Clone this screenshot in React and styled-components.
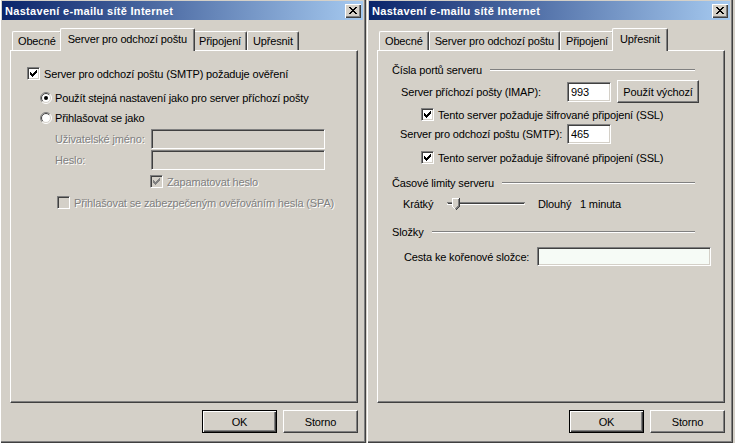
import React from "react";
import styled, { createGlobalStyle } from "styled-components";

const GlobalStyle = createGlobalStyle`
  html, body { margin: 0; padding: 0; background: #d4d0c8; overflow: hidden; }
  body {
    font-family: "Liberation Sans", Arial, sans-serif;
    font-size: 11px;
    letter-spacing: -0.15px;
    color: #000;
  }
`;

const Screen = styled.div`
  display: flex;
  width: 735px;
  height: 443px;
  overflow: hidden;
  background: #d4d0c8;
`;

const Window = styled.div`
  flex: none;
  width: 367px;
  height: 445px;
  margin-top: -2px;
  margin-left: ${p => p.$offset || 0}px;
  box-sizing: border-box;
  padding: 3px;
  display: flex;
  flex-direction: column;
  background: #d4d0c8;
  box-shadow: inset 1px 1px 0 #d4d0c8, inset 2px 2px 0 #fff, inset -1px -1px 0 #404040, inset -2px -2px 0 #808080;
`;

const TitleBar = styled.div`
  height: 19px;
  display: flex;
  align-items: center;
  justify-content: space-between;
  padding: 0 2px 0 3px;
  background: linear-gradient(to right, #0a246a, #a6caf0);
`;

const TitleText = styled.span`
  color: #fff;
  font-weight: bold;
  font-size: 11px;
  letter-spacing: 0.3px;
`;

const CloseButton = styled.div`
  width: 16px;
  height: 14px;
  box-sizing: border-box;
  background: #d4d0c8;
  display: flex;
  align-items: center;
  justify-content: center;
  box-shadow: inset 1px 1px 0 #fff, inset -1px -1px 0 #404040, inset -2px -2px 0 #808080;
`;

const Body = styled.div`
  flex: 1;
  display: flex;
  flex-direction: column;
  padding: 0 5px 0 8px;
`;

const TabRow = styled.div`
  position: relative;
  z-index: 1;
  margin-top: 8px;
  height: 22px;
  display: flex;
  align-items: flex-end;
  padding-left: 2px;
`;

const Tab = styled.div`
  position: relative;
  z-index: ${p => (p.$active ? 2 : 1)};
  height: ${p => (p.$active ? 23 : 19)}px;
  margin: ${p => (p.$active ? "0 -2px -1px" : "0")};
  padding: 0 ${p => (p.$active ? 7 : 5)}px ${p => (p.$active ? 2 : 0)}px;
  box-sizing: border-box;
  display: flex;
  align-items: center;
  background: #d4d0c8;
  border-top: 1px solid #fff;
  border-left: 1px solid #fff;
  border-right: 1px solid #404040;
  border-radius: 2px 2px 0 0;
  box-shadow: inset -1px 0 0 #808080;
  white-space: nowrap;
`;

const Panel = styled.div`
  height: 353px;
  box-sizing: border-box;
  display: flex;
  flex-direction: column;
  border-top: 1px solid #fff;
  border-left: 1px solid #fff;
  border-right: 1px solid #404040;
  border-bottom: 1px solid #404040;
  box-shadow: inset -1px -1px 0 #808080;
`;

const Row = styled.div`
  display: flex;
  align-items: center;
  height: ${p => p.$h || 13}px;
  margin-top: ${p => p.$top || 0}px;
  padding-left: ${p => p.$indent || 0}px;
  white-space: nowrap;
`;

const Label = styled.span`
  flex: none;
  width: ${p => (p.$w ? `${p.$w}px` : "auto")};
  margin-left: ${p => p.$gap || 0}px;
  color: ${p => (p.$disabled ? "#808080" : "#000")};
  text-shadow: ${p => (p.$disabled ? "1px 1px 0 #fff" : "none")};
`;

const BoxFrame = styled.span`
  flex: none;
  width: 13px;
  height: 13px;
  box-sizing: border-box;
  display: flex;
  align-items: center;
  justify-content: center;
  background: ${p => (p.$disabled ? "#d4d0c8" : "#fff")};
  border: 1px solid;
  border-color: #808080 #fff #fff #808080;
  box-shadow: inset 1px 1px 0 #404040, inset -1px -1px 0 #d4d0c8;
`;

const TextBox = styled.input`
  flex: none;
  width: ${p => p.$w}px;
  height: ${p => p.$h || 20}px;
  box-sizing: border-box;
  margin: 0;
  padding: 0 3px;
  font: inherit;
  letter-spacing: inherit;
  color: #000;
  outline: none;
  background: ${p => (p.$disabled ? "#d4d0c8" : p.$tint ? "#f6fbf6" : "#fff")};
  border: 1px solid;
  border-color: #808080 #fff #fff #808080;
  box-shadow: inset 1px 1px 0 #404040, inset -1px -1px 0 #d4d0c8;
`;

const PushButton = styled.div`
  flex: none;
  width: ${p => p.$w || 75}px;
  height: 23px;
  margin-left: ${p => p.$gap || 0}px;
  box-sizing: border-box;
  display: flex;
  align-items: center;
  justify-content: center;
  background: #d4d0c8;
  border: 1px solid;
  border-color: ${p => (p.$default ? "#000" : "#fff #404040 #404040 #fff")};
  box-shadow: ${p =>
    p.$default
      ? "inset 1px 1px 0 #fff, inset -1px -1px 0 #404040, inset -2px -2px 0 #808080"
      : "inset -1px -1px 0 #808080"};
  white-space: nowrap;
`;

const ButtonRow = styled.div`
  display: flex;
  justify-content: flex-end;
  margin-top: 7px;
  gap: 6px;
`;

const GroupHead = styled.div`
  display: flex;
  align-items: center;
  gap: 8px;
  height: 13px;
  margin-top: ${p => p.$top}px;
  padding-left: 14px;
  padding-right: 29px;
  white-space: nowrap;
`;

const Etched = styled.span`
  flex: 1;
  height: 0;
  border-top: 1px solid #808080;
  border-bottom: 1px solid #fff;
`;

const Check = ({ checked, disabled }) => (
  <BoxFrame $disabled={disabled}>
    {checked && (
      <svg width="7" height="7" viewBox="0 0 7 7" shapeRendering="crispEdges">
        <path
          fill={disabled ? "#808080" : "#000"}
          d="M0 2h1v3H0z M1 3h1v3H1z M2 4h1v3H2z M3 3h1v3H3z M4 2h1v3H4z M5 1h1v3H5z M6 0h1v3H6z"
        />
      </svg>
    )}
  </BoxFrame>
);

const arc = (r, from, to) => {
  const a = (d) => [6 + r * Math.cos((d * Math.PI) / 180), 6 + r * Math.sin((d * Math.PI) / 180)];
  const [x1, y1] = a(from);
  const [x2, y2] = a(to);
  return `M${x1} ${y1} A${r} ${r} 0 0 1 ${x2} ${y2}`;
};

const Radio = ({ checked }) => (
  <svg width="12" height="12" viewBox="0 0 12 12" style={{ flex: "none" }}>
    <circle cx="6" cy="6" r="5" fill="#fff" />
    <path d={arc(5.5, 135, 315)} stroke="#808080" fill="none" />
    <path d={arc(4.5, 135, 315)} stroke="#404040" fill="none" />
    <path d={arc(5.5, 315, 135)} stroke="#fff" fill="none" />
    <path d={arc(4.5, 315, 135)} stroke="#d4d0c8" fill="none" />
    {checked && <circle cx="6" cy="6" r="2" fill="#000" />}
  </svg>
);

const Slider = () => (
  <svg width="78" height="14" viewBox="0 0 78 14" style={{ flex: "none" }} shapeRendering="crispEdges">
    <rect x="0" y="5" width="78" height="1" fill="#808080" />
    <rect x="1" y="6" width="76" height="1" fill="#404040" />
    <rect x="0" y="7" width="78" height="1" fill="#fff" />
    <path d="M5 1h7v8l-3.5 3.5L5 9z" fill="#d4d0c8" />
    <path d="M5.5 9V1.5h6" stroke="#fff" fill="none" />
    <path d="M12.5 1v8.5L8.5 13.5" stroke="#404040" fill="none" />
    <path d="M11.5 2v7L8.5 12" stroke="#808080" fill="none" />
    <path d="M5.5 9.5L8 12" stroke="#fff" fill="none" />
  </svg>
);

const CloseGlyph = () => (
  <svg width="8" height="7" viewBox="0 0 8 7" shapeRendering="crispEdges">
    <path
      fill="#000"
      d="M0 0h2v1H0z M6 0h2v1H6z M1 1h2v1H1z M5 1h2v1H5z M2 2h4v1H2z M3 3h2v1H3z M2 4h4v1H2z M1 5h2v1H1z M5 5h2v1H5z M0 6h2v1H0z M6 6h2v1H6z"
    />
  </svg>
);

const tabs = ["Obecné", "Server pro odchozí poštu", "Připojení", "Upřesnit"];

const Dialog = ({ active, offset, children }) => (
  <Window $offset={offset}>
    <TitleBar>
      <TitleText>Nastavení e-mailu sítě Internet</TitleText>
      <CloseButton>
        <CloseGlyph />
      </CloseButton>
    </TitleBar>
    <Body>
      <TabRow>
        {tabs.map((t, i) => (
          <Tab key={t} $active={i === active}>
            {t}
          </Tab>
        ))}
      </TabRow>
      <Panel>{children}</Panel>
      <ButtonRow>
        <PushButton $default>OK</PushButton>
        <PushButton>Storno</PushButton>
      </ButtonRow>
    </Body>
  </Window>
);

const OutgoingPage = () => (
  <>
    <Row $top={16} $indent={16}>
      <Check checked />
      <Label $gap={4}>Server pro odchozí poštu (SMTP) požaduje ověření</Label>
    </Row>
    <Row $top={12} $indent={29} $h={12}>
      <Radio checked />
      <Label $gap={3}>Použít stejná nastavení jako pro server příchozí pošty</Label>
    </Row>
    <Row $top={8} $indent={29} $h={12}>
      <Radio />
      <Label $gap={3}>Přihlašovat se jako</Label>
    </Row>
    <Row $top={5} $indent={44} $h={20}>
      <Label $w={96} $disabled>Uživatelské jméno:</Label>
      <TextBox $w={174} $disabled disabled readOnly value="" />
    </Row>
    <Row $top={1} $indent={44} $h={20}>
      <Label $w={96} $disabled>Heslo:</Label>
      <TextBox $w={174} $disabled disabled readOnly value="" />
    </Row>
    <Row $top={5} $indent={139}>
      <Check checked disabled />
      <Label $gap={4} $disabled>Zapamatovat heslo</Label>
    </Row>
    <Row $top={8} $indent={46}>
      <Check disabled />
      <Label $gap={4} $disabled>Přihlašovat se zabezpečeným ověřováním hesla (SPA)</Label>
    </Row>
  </>
);

const AdvancedPage = () => (
  <>
    <GroupHead $top={12}>
      <span>Čísla portů serveru</span>
      <Etched />
    </GroupHead>
    <Row $top={4} $indent={23} $h={23}>
      <Label $w={166}>Server příchozí pošty (IMAP):</Label>
      <TextBox $w={44} readOnly value="993" />
      <PushButton $w={82} $gap={6}>Použít výchozí</PushButton>
    </Row>
    <Row $top={5} $indent={43}>
      <Check checked />
      <Label $gap={4}>Tento server požaduje šifrované připojení (SSL)</Label>
    </Row>
    <Row $top={3} $indent={22} $h={20}>
      <Label $w={167}>Server pro odchozí poštu (SMTP):</Label>
      <TextBox $w={44} readOnly value="465" />
    </Row>
    <Row $top={7} $indent={43}>
      <Check checked />
      <Label $gap={4}>Tento server požaduje šifrované připojení (SSL)</Label>
    </Row>
    <GroupHead $top={12}>
      <span>Časové limity serveru</span>
      <Etched />
    </GroupHead>
    <Row $top={8} $indent={25} $h={14}>
      <Label $w={44}>Krátký</Label>
      <Slider />
      <Label $w={42} $gap={13}>Dlouhý</Label>
      <Label>1 minuta</Label>
    </Row>
    <GroupHead $top={14}>
      <span>Složky</span>
      <Etched />
    </GroupHead>
    <Row $top={9} $indent={26} $h={19}>
      <Label $w={133}>Cesta ke kořenové složce:</Label>
      <TextBox $w={174} $h={19} $tint readOnly value="" />
    </Row>
  </>
);

export default function App() {
  return (
    <>
      <GlobalStyle />
      <Screen>
        <Dialog active={1} offset={-1}>
          <OutgoingPage />
        </Dialog>
        <Dialog active={3}>
          <AdvancedPage />
        </Dialog>
      </Screen>
    </>
  );
}
